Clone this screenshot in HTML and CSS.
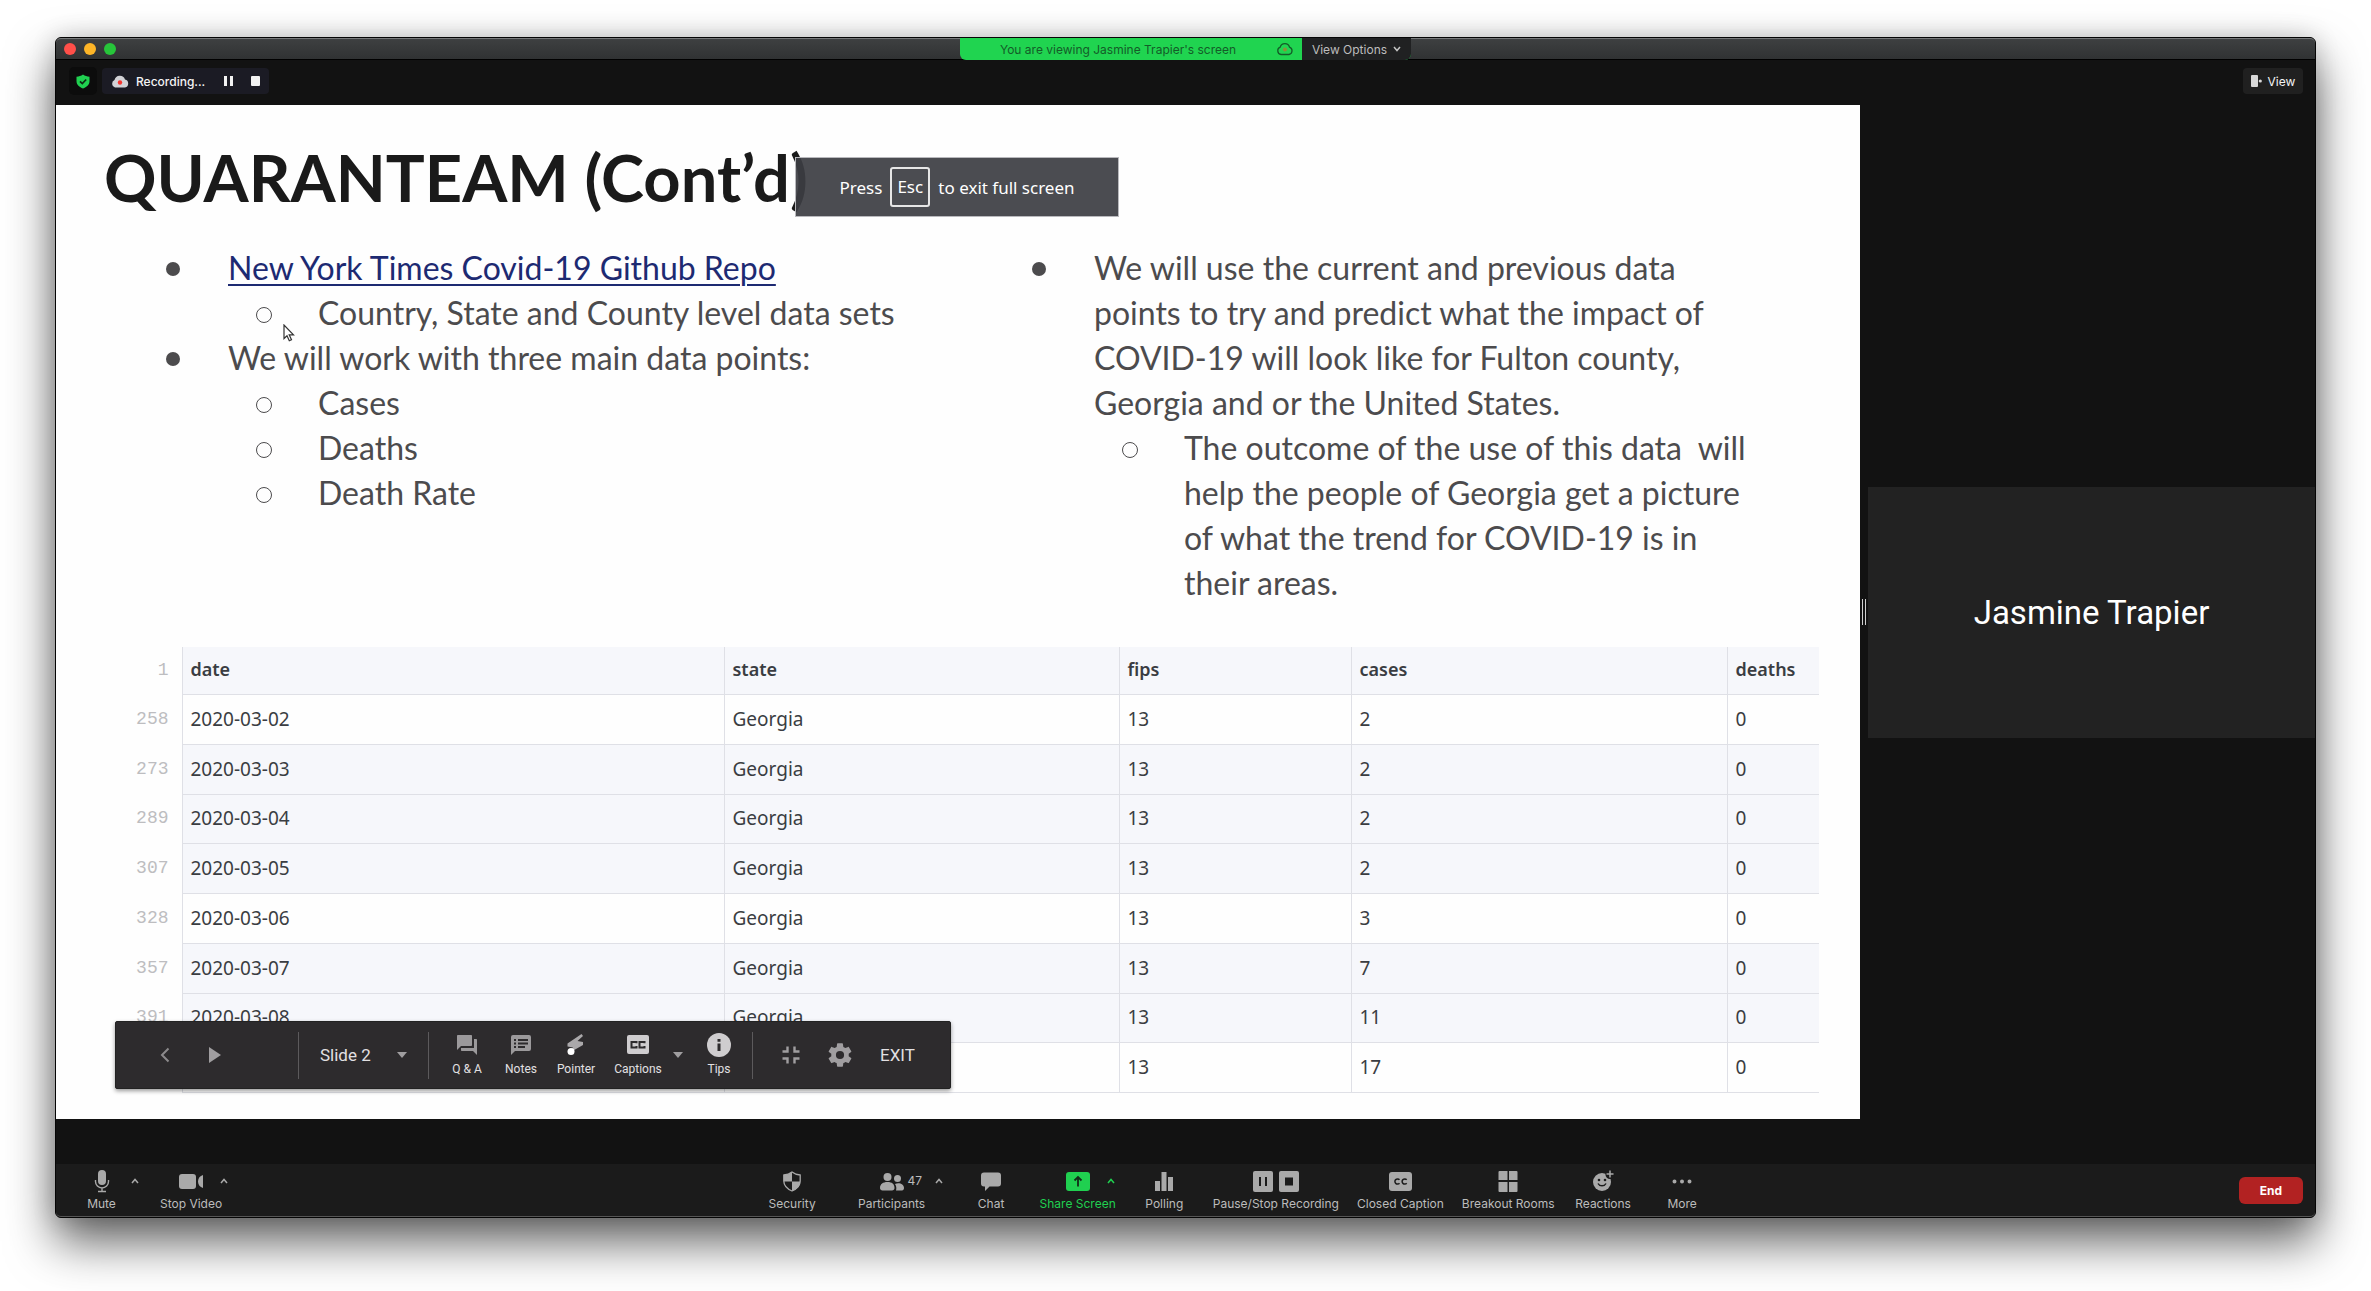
FILE: index.html
```html
<!DOCTYPE html>
<html lang="en">
<head>
<meta charset="utf-8">
<title>Meeting</title>
<link rel="stylesheet" href="styles.css">
</head>
<body>
<main class="window">
  <header class="titlebar">
    <div class="lights"><i class="light red"></i><i class="light amber"></i><i class="light green"></i></div>
    <div class="banner">
      <span class="banner-text">You are viewing Jasmine Trapier's screen</span>
      <svg class="banner-cloud" width="18" height="14" viewBox="0 0 18 14"><path d="M5 12.5a3.8 3.8 0 0 1-.8-7.3 4.8 4.8 0 0 1 9.3 0A3.8 3.8 0 0 1 13 12.500z" fill="none" stroke="#145c28" stroke-width="1.300"/><circle cx="9" cy="7.500" r="2" fill="#8a8f3a"/></svg>
      <button class="view-options">View Options
        <svg width="8" height="6" viewBox="0 0 8 6"><path d="M1 1l3 3.500L7 1" fill="none" stroke="#c4c4c4" stroke-width="1.500"/></svg>
      </button>
    </div>
  </header>

  <div class="statusbar">
    <button class="shield" aria-label="Encryption">
      <svg width="14" height="15" viewBox="0 0 14 15"><path d="M7 .5c2 1.500 4 2 6.500 2.200V7c0 4-3 6-6.500 7.500C3.500 13 .5 11 .5 7V2.700C3 2.500 5 2 7 .5z" fill="#20d050"/><path d="M4 7.300l2.300 2.300L10.200 5.500" fill="none" stroke="#0d2a14" stroke-width="1.700"/></svg>
    </button>
    <div class="recording">
      <svg width="18" height="13" viewBox="0 0 18 13"><path d="M4 12.500a4 4 0 0 1-.5-7.500A5.500 5.500 0 0 1 14 4.500a4.100 4.100 0 0 1 0 8z" fill="#d2d2d6"/><circle cx="9" cy="7.500" r="2.200" fill="#f5352f"/></svg>
      <span>Recording...</span>
      <button aria-label="Pause recording"><svg width="9" height="10" viewBox="0 0 9 10"><path d="M0 0h3v10H0zM6 0h3v10H6z" fill="#f2f2f2"/></svg></button>
      <button aria-label="Stop recording"><svg width="9" height="10" viewBox="0 0 9 10"><rect width="9" height="10" rx="1" fill="#f2f2f2"/></svg></button>
    </div>
    <button class="view">
      <svg width="11" height="12" viewBox="0 0 11 12"><rect width="7" height="12" rx="1" fill="#d8d8d8"/><circle cx="9.300" cy="6" r="1.600" fill="#d8d8d8"/></svg>View
    </button>
  </div>

  <div class="stage">
    <section class="slide">
      <h1>QUARANTEAM (Cont’d)</h1>
      <div class="columns">
        <ul class="points">
          <li><a href="#repo">New York Times Covid-19 Github Repo</a>
            <ul><li>Country, State and County level data sets</li></ul>
          </li>
          <li>We will work with three main data points:
            <ul><li>Cases</li><li>Deaths</li><li>Death Rate</li></ul>
          </li>
        </ul>
        <ul class="points">
          <li>We will use the current and previous data points to try and predict what the impact of COVID-19 will look like for Fulton county, Georgia and or the United States.
            <ul><li>The outcome of the use of this data&nbsp; will help the people of Georgia get a picture of what the trend for COVID-19 is in their areas.</li></ul>
          </li>
        </ul>
      </div>
      <table class="data">
        <colgroup><col class="c-num"><col class="c-date"><col class="c-state"><col class="c-fips"><col class="c-cases"><col></colgroup>
        <tbody>
          <tr class="shade head"><td class="num">1</td><th>date</th><th>state</th><th>fips</th><th>cases</th><th>deaths</th></tr>
          <tr><td class="num">258</td><td>2020-03-02</td><td>Georgia</td><td>13</td><td>2</td><td>0</td></tr>
          <tr class="shade"><td class="num">273</td><td>2020-03-03</td><td>Georgia</td><td>13</td><td>2</td><td>0</td></tr>
          <tr class="shade"><td class="num">289</td><td>2020-03-04</td><td>Georgia</td><td>13</td><td>2</td><td>0</td></tr>
          <tr class="shade"><td class="num">307</td><td>2020-03-05</td><td>Georgia</td><td>13</td><td>2</td><td>0</td></tr>
          <tr><td class="num">328</td><td>2020-03-06</td><td>Georgia</td><td>13</td><td>3</td><td>0</td></tr>
          <tr class="shade"><td class="num">357</td><td>2020-03-07</td><td>Georgia</td><td>13</td><td>7</td><td>0</td></tr>
          <tr class="shade"><td class="num">391</td><td>2020-03-08</td><td>Georgia</td><td>13</td><td>11</td><td>0</td></tr>
          <tr><td class="num"></td><td></td><td></td><td>13</td><td>17</td><td>0</td></tr>
        </tbody>
      </table>

      <div class="esc-note"><span>Press</span><kbd>Esc</kbd><span>to exit full screen</span></div>
      <svg class="cursor" width="12" height="18" viewBox="0 0 12 18"><path d="M1 1v13.500l3-2.800 2.300 5 2.200-1-2.300-4.900H10.500z" fill="#fff" stroke="#333" stroke-width="1.200"/></svg>

      <div class="player">
        <div class="player-nav">
          <button aria-label="Previous"><svg width="10" height="16" viewBox="0 0 10 16"><path d="M8.500 1.500L2 8l6.500 6.500" fill="none" stroke="#8c8a8c" stroke-width="2"/></svg></button>
          <button aria-label="Play"><svg width="12" height="16" viewBox="0 0 12 16"><path d="M0 0l12 8-12 8z" fill="#a09ea0"/></svg></button>
        </div>
        <div class="player-slide">
          <select aria-label="Slide"><option>Slide 2</option></select>
          <svg width="10" height="6" viewBox="0 0 10 6"><path d="M0 0h10L5 6z" fill="#a09ea0"/></svg>
        </div>
        <div class="player-tools">
          <button class="tool"><svg width="24" height="24" viewBox="0 0 24 24"><path d="M21 6h-2v9H6v2c0 .6.400 1 1 1h11l4 4V7c0-.6-.4-1-1-1zm-4 6V3c0-.6-.4-1-1-1H3c-.6 0-1 .4-1 1v14l4-4h10c.6 0 1-.4 1-1z" fill="#9b999b"/></svg>Q &amp; A</button>
          <button class="tool"><svg width="24" height="24" viewBox="0 0 24 24"><path d="M20 2H4a2 2 0 0 0-2 2v18l4-4h14a2 2 0 0 0 2-2V4a2 2 0 0 0-2-2z" fill="#9b999b"/><path d="M5 6h2v2H5zM9 6h10v2H9zM5 9.500h2v2H5zM9 9.500h10v2H9zM5 13h2v2H5zM9 13h7v2H9z" fill="#2d2b2d"/></svg>Notes</button>
          <button class="tool pointer"><svg width="24" height="24" viewBox="0 0 24 24"><path d="M17.500 1L3.500 10.500v3l5.500 1L5 20l14-8V9l-5.500-1L19 3z" fill="#aaa8aa"/><circle cx="7" cy="18.500" r="3.500" fill="#fff"/></svg>Pointer</button>
          <button class="tool captions"><svg width="24" height="24" viewBox="0 0 24 24"><rect x="1" y="2" width="22" height="19" rx="2" fill="#cfcdcf"/><path d="M10.500 10.300V9H5.500v5.500h5v-1.400M18.500 10.300V9h-5v5.500h5v-1.400" fill="none" stroke="#2d2b2d" stroke-width="2"/></svg>Captions</button>
          <button class="caret" aria-label="Caption options"><svg width="10" height="6" viewBox="0 0 10 6"><path d="M0 0h10L5 6z" fill="#a09ea0"/></svg></button>
          <button class="tool"><svg width="24" height="24" viewBox="0 0 24 24"><circle cx="12" cy="12" r="12" fill="#cfcdcf"/><path d="M10.500 10.500h3V18h-3zM10.500 6h3v2.800h-3z" fill="#2d2b2d"/></svg>Tips</button>
        </div>
        <div class="player-end">
          <button aria-label="Exit full screen"><svg width="18" height="18" viewBox="0 0 18 18"><path d="M5.500 0.500v5H.5M12.500 .5v5h5M5.500 17.500v-5h-5M12.500 17.500v-5h5" fill="none" stroke="#a09ea0" stroke-width="2.400"/></svg></button>
          <button aria-label="Settings"><svg width="28" height="28" viewBox="0 0 24 24"><path d="M19.430 12.980c.04-.32.07-.64.07-.98s-.03-.66-.07-.98l2.110-1.650c.19-.15.24-.42.12-.64l-2-3.460c-.12-.22-.39-.3-.61-.22l-2.490 1c-.52-.4-1.080-.73-1.690-.98l-.38-2.650A.49.49 0 0 0 14 2h-4c-.25 0-.46.18-.49.42l-.38 2.650c-.61.25-1.170.59-1.690.98l-2.490-1c-.23-.09-.49 0-.61.22l-2 3.460c-.13.22-.07.49.12.64l2.110 1.650c-.04.32-.07.65-.07.98s.03.66.07.98l-2.110 1.650c-.19.15-.24.42-.12.64l2 3.460c.12.22.39.3.61.22l2.490-1c.52.4 1.080.73 1.690.98l.38 2.650c.03.24.24.42.49.42h4c.25 0 .46-.18.49-.42l.38-2.650c.61-.25 1.170-.59 1.690-.98l2.490 1c.23.09.49 0 .61-.22l2-3.460c.12-.22.07-.49-.12-.64l-2.110-1.650zM12 15.500a3.500 3.500 0 1 1 0-7 3.500 3.500 0 0 1 0 7z" fill="#a09ea0"/></svg></button>
          <button class="exit">EXIT</button>
        </div>
      </div>
    </section>

    <aside class="side">
      <div class="handle"></div>
      <div class="tile">Jasmine Trapier</div>
    </aside>
  </div>

  <footer class="controls">
    <div class="group left">
      <button class="item"><span class="top"><svg width="24" height="24" viewBox="0 0 24 24"><rect x="8" y="1" width="8" height="15" rx="4" fill="#a9a9a9"/><path d="M5.500 11v1.500a6.500 6.500 0 0 0 13 0V11M12 19v3.500M8 22.500h8" fill="none" stroke="#a9a9a9" stroke-width="1.400"/></svg><span class="extra"><svg class="chev" width="8" height="6" viewBox="0 0 8 6"><path d="M1 5l3-3.500L7 5"/></svg></span></span>Mute</button>
      <button class="item"><span class="top"><svg width="24" height="24" viewBox="0 0 24 24"><rect y="5" width="17" height="15" rx="3" fill="#a9a9a9"/><path d="M24 6v13c-3-1-5-3-5-6.500S21 7 24 6z" fill="#a9a9a9"/></svg><span class="extra"><svg class="chev" width="8" height="6" viewBox="0 0 8 6"><path d="M1 5l3-3.500L7 5"/></svg></span></span>Stop Video</button>
    </div>
    <div class="group center">
      <button class="item"><span class="top"><svg width="24" height="24" viewBox="0 0 24 24"><path d="M12 3c2.500 2 5 2.800 8.200 3v6c0 5-3.200 7.800-8.200 10-5-2.200-8.200-5-8.200-10V6C7 5.800 9.500 5 12 3z" fill="none" stroke="#a9a9a9" stroke-width="1.300"/><path d="M12 3v9.500H3.800V6C7 5.800 9.500 5 12 3zM12 12.500h8.200c0 5-3.200 7.500-8.200 9.500z" fill="#a9a9a9"/></svg></span>Security</button>
      <button class="item people"><span class="top"><svg width="24" height="24" viewBox="0 0 24 24"><circle cx="7.500" cy="8" r="4" fill="#a9a9a9"/><circle cx="17.500" cy="9.500" r="3.500" fill="#a9a9a9"/><path d="M0 19c0-4 3-6 7.500-6s7 2 7 6c0 1.500-1 2.500-2.500 2.500H2.500C1 21.500 0 20.500 0 19zM16 21.500c.7-2.500.3-4.500-1-6.500 4-2 9 0 9 4 0 1.500-.8 2.500-2 2.500z" fill="#a9a9a9"/></svg><span class="extra">47<svg class="chev" width="8" height="6" viewBox="0 0 8 6"><path d="M1 5l3-3.500L7 5"/></svg></span></span>Participants</button>
      <button class="item"><span class="top"><svg width="24" height="24" viewBox="0 0 24 24"><path d="M5 3.500h14a3 3 0 0 1 3 3v8a3 3 0 0 1-3 3h-8.500L6 22v-4.500H5a3 3 0 0 1-3-3v-8a3 3 0 0 1 3-3z" fill="#a9a9a9"/></svg></span>Chat</button>
      <button class="item share"><span class="top"><svg width="24" height="24" viewBox="0 0 24 24"><rect y="3" width="24" height="19" rx="3" fill="#20d050"/><path d="M12 17.500V8M8.500 11.500L12 8l3.500 3.500" fill="none" stroke="#122a18" stroke-width="1.800"/></svg><span class="extra"><svg class="chev" width="8" height="6" viewBox="0 0 8 6"><path d="M1 5l3-3.500L7 5"/></svg></span></span>Share Screen</button>
      <button class="item"><span class="top"><svg width="24" height="24" viewBox="0 0 24 24"><path d="M3 12h5v10H3zM9.500 3h5v19h-5zM16 8h5v14h-5z" fill="#a9a9a9"/></svg></span>Polling</button>
      <button class="item"><span class="top"><svg width="46" height="24" viewBox="0 0 46 24"><rect y="2" width="20" height="21" rx="2" fill="#a9a9a9"/><rect x="26" y="2" width="20" height="21" rx="2" fill="#a9a9a9"/><path d="M6 8h2v9H6zM12 8h2v9h-2zM32 8.500h8v8h-8z" fill="#1b1b1b"/></svg></span>Pause/Stop Recording</button>
      <button class="item"><span class="top"><svg width="24" height="24" viewBox="0 0 24 24"><rect x="1" y="3" width="23" height="19" rx="3" fill="#a9a9a9"/><path d="M11.500 10.800a2.600 2.600 0 1 0 0 3.400M18.700 10.800a2.600 2.600 0 1 0 0 3.400" fill="none" stroke="#1b1b1b" stroke-width="1.500"/></svg></span>Closed Caption</button>
      <button class="item"><span class="top"><svg width="24" height="24" viewBox="0 0 24 24"><path d="M3.500 2H11.500v9h-9V3a1 1 0 0 1 1-1zM13 2h7.500a1 1 0 0 1 1 1v8H13zM2.500 13h9v10h-8a1 1 0 0 1-1-1zM13 13h8.500v9a1 1 0 0 1-1 1H13z" fill="#a9a9a9"/></svg></span>Breakout Rooms</button>
      <button class="item"><span class="top"><svg width="24" height="24" viewBox="0 0 24 24"><circle cx="11" cy="13" r="9" fill="#a9a9a9"/><circle cx="19" cy="5.500" r="4.500" fill="#1b1b1b"/><path d="M19 1.500v7M15.500 5h7" stroke="#a9a9a9" stroke-width="1.500"/><circle cx="8" cy="11" r="1.300" fill="#1b1b1b"/><circle cx="14" cy="11" r="1.300" fill="#1b1b1b"/><path d="M7 14.500c1.500 3 6.500 3 8 0" fill="none" stroke="#1b1b1b" stroke-width="1.500"/></svg></span>Reactions</button>
      <button class="item"><span class="top"><svg width="24" height="24" viewBox="0 0 24 24"><path d="M4.500 10.500a2 2 0 1 1 0 4 2 2 0 0 1 0-4zM12 10.500a2 2 0 1 1 0 4 2 2 0 0 1 0-4zM19.500 10.500a2 2 0 1 1 0 4 2 2 0 0 1 0-4z" fill="#a9a9a9"/></svg></span>More</button>
    </div>
    <button class="end">End</button>
  </footer>
</main>
</body>
</html>
```
FILE: styles.css
```css
* { box-sizing: border-box; }
body {
  margin: 0;
  min-height: 100vh;
  padding: 37px 55px 73px;
  display: flex;
  background: #fff;
  font-family: Inter, "Liberation Sans", sans-serif;
}
button {
  border: 0;
  padding: 0;
  margin: 0;
  background: none;
  color: inherit;
  font: inherit;
  display: flex;
  align-items: center;
  justify-content: center;
}
svg { display: block; flex: none; }

.window {
  flex: 1;
  min-width: 0;
  display: flex;
  flex-direction: column;
  background: #121212;
  border: 1px solid #050505;
  border-radius: 6px;
  box-shadow: 0 24px 48px rgba(0, 0, 0, .62), 0 0 24px rgba(0, 0, 0, .16);
  position: relative;
}

/* title bar */
.titlebar {
  height: 22px;
  display: grid;
  grid-template-columns: 1fr auto 1fr;
  background: linear-gradient(#3e4041, #303233);
  border-top: 1px solid #77797a;
  border-bottom: 1px solid #000;
  border-radius: 5px 5px 0 0;
}
.lights { display: flex; gap: 8px; padding: 4px 8px; }
.light { width: 12px; height: 12px; border-radius: 50%; }
.red { background: #ff4f49; }
.amber { background: #fdb527; }
.green { background: #27c53a; }
.banner {
  height: 22px;
  margin-top: -1px;
  display: flex;
  align-items: center;
  background: #20d450;
  border-radius: 0 0 6px 6px;
  overflow: hidden;
  font-size: 12px;
  color: #145c28;
}
.banner-text { width: 316px; text-align: center; }
.banner-cloud { margin-right: 8px; }
.view-options {
  height: 22px;
  width: 109px;
  gap: 6px;
  background: #202122;
  color: #bdbdbd;
}

/* status bar */
.statusbar {
  height: 45px;
  display: flex;
  align-items: center;
  gap: 5px;
  padding: 0 12px 3px 13px;
  color: #f4f4f4;
  font-size: 12px;
}
.shield { width: 28px; height: 28px; border-radius: 5px; background: #0c0c0c; }
.recording {
  display: flex;
  align-items: center;
  height: 26px;
  width: 167px;
  padding: 0 9px;
  border-radius: 4px;
  background: #1b1b24;
  font-weight: 500;
}
.recording span { flex: 1; padding-left: 7px; }
.recording button + button { margin-left: 18px; }
.view {
  margin-left: auto;
  width: 60px;
  height: 26px;
  gap: 6px;
  border-radius: 4px;
  background: #202020;
}

/* shared slide and gallery */
.stage { flex: 1; display: flex; padding-bottom: 45px; }
.slide {
  flex: 1;
  min-width: 0;
  position: relative;
  background: #fefefe;
  padding: 32px 41px 26px 74px;
  font-family: Lato, sans-serif;
  color: #4c4b4d;
}
h1 {
  margin: 0 0 0 -26px;
  font-size: 65px;
  line-height: 80px;
  font-weight: 700;
  color: #1a1a1a;
}
.columns {
  display: grid;
  grid-template-columns: 790fr 756fr;
  column-gap: 76px;
  padding: 28px 59px 0 8px;
  height: 430px;
}
.points, .points ul { margin: 0; padding: 0; list-style: none; }
.points { font-size: 32px; line-height: 45px; }
.points li { padding-left: 90px; position: relative; }
.points li::before {
  content: "";
  position: absolute;
  left: 28px;
  top: 17px;
  width: 14px;
  height: 14px;
  border-radius: 50%;
  background: #4c4b4d;
}
.points li li::before { background: none; border: 1px solid #4c4b4d; }
.points a { color: #1d2a72; text-decoration-thickness: 2px; text-underline-offset: 4px; }

.data {
  width: 100%;
  height: 446px;
  table-layout: fixed;
  border-collapse: collapse;
  font-family: "Noto Sans", sans-serif;
  font-size: 19px;
  line-height: 24px;
  color: #3a3d42;
}
.data tr { height: 49px; }
.data .head { height: 47px; }
.c-num { width: 52px; }
.c-date { width: 542px; }
.c-state { width: 395px; }
.c-fips { width: 232px; }
.c-cases { width: 376px; }
.data th, .data td { padding: 0 8px 1px; text-align: left; border: 1px solid #dfe0e6; border-right: 0; }
.data th { font-size: 18px; font-weight: 600; border-top: 0; padding-bottom: 3px; }
.data .num {
  padding: 0 13px 1px 0;
  border: 0;
  background: #fefefe;
  text-align: right;
  color: #bdbdc0;
  font-family: "Liberation Mono", monospace;
  font-size: 18px;
}
.shade { background: #f6f7fb; }

.esc-note {
  position: absolute;
  left: 739px;
  top: 52px;
  height: 60px;
  width: 324px;
  display: flex;
  align-items: center;
  justify-content: center;
  gap: 8px;
  background: rgba(60, 61, 66, .92);
  border: 1px solid #b9b9bd;
  color: #fff;
  font-family: "Noto Sans", sans-serif;
  font-size: 17px;
}
kbd {
  font: inherit;
  width: 40px;
  height: 40px;
  line-height: 36px;
  text-align: center;
  border: 2px solid #e6e6e6;
  border-radius: 3px;
}
.cursor { position: absolute; left: 227px; top: 219px; }

/* presenter toolbar */
.player {
  position: absolute;
  left: 59px;
  bottom: 30px;
  height: 68px;
  display: flex;
  align-items: center;
  background: #2d2b2d;
  border: 1px solid #222;
  border-radius: 2px;
  box-shadow: 0 2px 4px rgba(0, 0, 0, .4);
  font-family: Roboto, sans-serif;
  font-size: 12px;
  color: #e2e0e2;
}
.player > div { display: flex; align-items: center; height: 47px; }
.player > div + div { border-left: 1px solid #5c5a5c; }
.player button { flex: none; }
.player-nav { width: 182px; padding-left: 24px; }
.player-nav button { width: 50px; height: 47px; }
.player-slide { width: 130px; padding: 0 21px; justify-content: space-between; }
select {
  appearance: none;
  border: 0;
  padding: 0;
  background: none;
  color: inherit;
  font: 17px Roboto, sans-serif;
}
.player-tools { width: 324px; padding-left: 11px; }
.tool { flex-direction: column; gap: 4px; width: 54px; line-height: 16px; }
.pointer { width: 56px; }
.captions { width: 68px; }
.caret { width: 12px; margin-right: 8px; }
.player-end { padding: 0 35px 0 13px; }
.player-end button { width: 49px; }
.player-end .exit { width: auto; margin-left: 16px; font-size: 17px; }

/* gallery */
.side { width: 455px; display: flex; align-items: center; }
.handle { width: 4px; height: 26px; margin: 0 2px; border: solid #d0d0d0; border-width: 0 1px; }
.tile {
  flex: 1;
  height: 251px;
  display: flex;
  align-items: center;
  justify-content: center;
  background: #222;
  color: #fff;
  font-family: Roboto, sans-serif;
  font-size: 33px;
}

/* meeting controls */
.controls {
  height: 53px;
  display: grid;
  grid-template-columns: auto 1fr auto;
  padding: 0 12px 0 6px;
  background: #1b1b1b;
  border-bottom: 1px solid #555;
  border-radius: 0 0 5px 5px;
  color: #bcbcbc;
  font-size: 12px;
}
.group { display: flex; justify-content: center; }
.left { gap: 10px; }
.center { padding-left: 4px; }
.item {
  flex-direction: column;
  justify-content: flex-start;
  min-width: 79px;
  padding: 5px 9px 0;
  line-height: 16px;
  gap: 3px;
  white-space: nowrap;
}
.people { min-width: 120px; }
.top { display: grid; grid-template-columns: 1fr auto 1fr; align-self: stretch; align-items: center; }
.top > svg { grid-column: 2; }
.extra { display: flex; align-items: center; width: 0; padding-left: 4px; }
.chev { margin-left: 13px; fill: none; stroke: #a9a9a9; stroke-width: 1.5px; }
.share { color: #20d050; }
.share .chev { stroke: #20d050; }
.end {
  align-self: center;
  width: 64px;
  height: 27px;
  border-radius: 6px;
  background: #b22222;
  color: #fff;
  font-weight: 700;
}
```
